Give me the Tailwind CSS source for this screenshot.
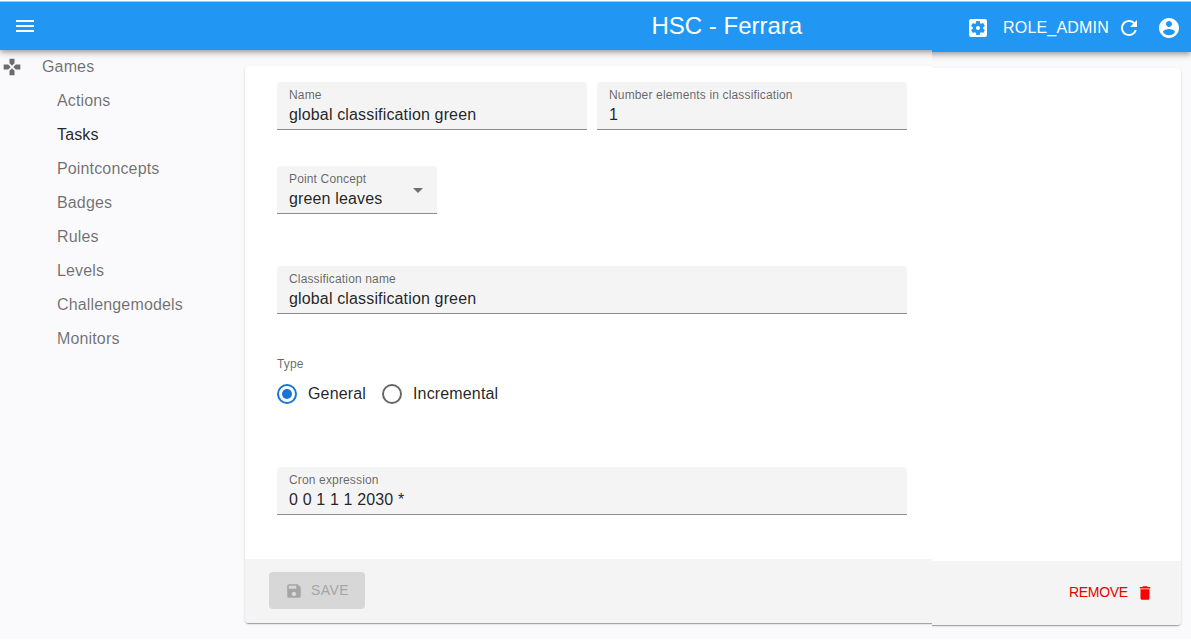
<!DOCTYPE html>
<html lang="en">
<head>
<meta charset="utf-8">
<title>HSC - Ferrara</title>
<script src="https://cdn.jsdelivr.net/npm/@tailwindcss/browser@4"></script>
</head>
<body class="h-[640px] w-[1191px] overflow-hidden bg-white font-['Liberation_Sans',Arial,sans-serif] text-base tracking-[0.15px] text-black/87">
<div class="mt-px flex h-[638px] border-t border-[#a9c3dc] bg-[#fafafc]">

  <!-- Navigation and form -->
  <div class="flex w-[932px] flex-col overflow-hidden">
    <header class="relative z-10 flex h-12 w-[952px] shrink-0 items-center bg-[#2196f3] pl-[13px] text-white shadow-[0_2px_4px_-1px_rgba(0,0,0,0.2),0_4px_5px_0_rgba(0,0,0,0.14),0_1px_10px_0_rgba(0,0,0,0.12)]">
      <svg class="size-6" viewBox="0 0 24 24" fill="currentColor"><path d="M3 18h18v-2H3v2zm0-5h18v-2H3v2zm0-7v2h18V6H3z"/></svg>
      <h1 class="ml-[614.500px] text-2xl leading-8 tracking-normal">HSC - Ferrara</h1>
    </header>
    <div class="flex grow">
      <nav class="w-[245px] shrink-0 text-black/57">
        <div class="flex h-[34px] items-center pl-0.5">
          <svg class="size-5" viewBox="0 0 24 24" fill="currentColor"><path d="M15 7.5V2H9v5.500l3 3 3-3zM7.500 9H2v6h5.500l3-3-3-3zM9 16.500V22h6v-5.500l-3-3-3 3zM16.500 9l-3 3 3 3H22V9h-5.500z"/></svg>
          <span class="ml-5">Games</span>
        </div>
        <ul class="pl-[57px] leading-[34px]">
          <li>Actions</li>
          <li class="text-black/87">Tasks</li>
          <li>Pointconcepts</li>
          <li>Badges</li>
          <li>Rules</li>
          <li>Levels</li>
          <li>Challengemodels</li>
          <li>Monitors</li>
        </ul>
      </nav>
      <main class="mt-4 flex h-[557px] w-[707px] shrink-0 flex-col rounded-l bg-white shadow-[0_2px_1px_-1px_rgba(0,0,0,0.2),0_1px_1px_0_rgba(0,0,0,0.14),0_1px_3px_0_rgba(0,0,0,0.12)]">
        <form class="h-[493px] pt-4 pl-8">
          <div class="flex gap-2.5">
            <div class="h-12 w-[310px] rounded-t border-b border-[#8c8c8c] bg-[#f4f4f4] px-3 pt-[5px]">
              <div class="text-xs leading-4 text-black/60">Name</div>
              <div class="leading-6">global classification green</div>
            </div>
            <div class="h-12 w-[310px] rounded-t border-b border-[#8c8c8c] bg-[#f4f4f4] px-3 pt-[5px]">
              <div class="text-xs leading-4 text-black/60">Number elements in classification</div>
              <div class="leading-6">1</div>
            </div>
          </div>
          <div class="mt-9 flex h-12 w-40 items-center justify-between rounded-t border-b border-[#8c8c8c] bg-[#f4f4f4] pr-[7px] pl-3">
            <div class="pt-[2px]">
              <div class="text-xs leading-4 text-black/60">Point Concept</div>
              <div class="leading-6">green leaves</div>
            </div>
            <svg class="size-6 text-black/54" viewBox="0 0 24 24" fill="currentColor"><path d="M7 10l5 5 5-5z"/></svg>
          </div>
          <div class="mt-[52px] h-12 w-[630px] rounded-t border-b border-[#8c8c8c] bg-[#f4f4f4] px-3 pt-[5px]">
            <div class="text-xs leading-4 text-black/60">Classification name</div>
            <div class="leading-6">global classification green</div>
          </div>
          <div class="mt-[42px] text-xs leading-4 text-black/60">Type</div>
          <div class="mt-2.5 flex h-6 items-center">
            <svg class="-ml-0.5 size-6 text-[#1976d2]" viewBox="0 0 24 24" fill="currentColor"><path d="M12 2a10 10 0 1 0 0 20 10 10 0 0 0 0-20zm0 18a8 8 0 1 1 0-16 8 8 0 0 1 0 16z"/><circle cx="12" cy="12" r="5"/></svg>
            <span class="ml-[9px] w-[72px] leading-6">General</span>
            <svg class="size-6 text-black/60" viewBox="0 0 24 24" fill="currentColor"><path d="M12 2a10 10 0 1 0 0 20 10 10 0 0 0 0-20zm0 18a8 8 0 1 1 0-16 8 8 0 0 1 0 16z"/></svg>
            <span class="ml-[9px] leading-6">Incremental</span>
          </div>
          <div class="mt-[61px] h-12 w-[630px] rounded-t border-b border-[#8c8c8c] bg-[#f4f4f4] px-3 pt-[5px]">
            <div class="text-xs leading-4 text-black/60">Cron expression</div>
            <div class="leading-6">0 0 1 1 1 2030 *</div>
          </div>
        </form>
        <footer class="flex h-16 items-start rounded-bl bg-[#f4f4f4] pt-[13px] pl-6">
          <button class="flex h-[37px] w-24 items-center rounded bg-[#d7d7d7] pl-4 text-sm tracking-[0.4px] text-[#a5a5a5]">
            <svg class="mt-px size-[18px]" viewBox="0 0 24 24" fill="currentColor"><path d="M17 3H5a2 2 0 0 0-2 2v14a2 2 0 0 0 2 2h14c1.100 0 2-.9 2-2V7l-4-4zm-5 16c-1.660 0-3-1.340-3-3s1.340-3 3-3 3 1.340 3 3-1.340 3-3 3zm3-10H5V5h10v4z"/></svg>
            <span class="mb-0.5 ml-2">SAVE</span>
          </button>
        </footer>
      </main>
    </div>
  </div>

  <!-- Account bar and removal -->
  <div class="flex w-[259px] flex-col overflow-hidden">
    <header class="relative z-10 -ml-5 flex h-[50px] shrink-0 items-center bg-[#2196f3] pt-0.5 pl-[54px] text-white shadow-[0_2px_4px_-1px_rgba(0,0,0,0.2),0_4px_5px_0_rgba(0,0,0,0.14),0_1px_10px_0_rgba(0,0,0,0.12)]">
      <svg class="size-6" viewBox="0 0 24 24" fill="currentColor"><path d="M12 10c-1.100 0-2 .9-2 2s.9 2 2 2 2-.9 2-2-.9-2-2-2zm7-7H5a2 2 0 0 0-2 2v14a2 2 0 0 0 2 2h14a2 2 0 0 0 2-2V5a2 2 0 0 0-2-2zm-1.750 9c0 .23-.02.460-.05.680l1.480 1.160c.13.110.17.300.08.450l-1.400 2.420c-.09.150-.27.210-.43.150l-1.740-.7c-.36.280-.76.510-1.180.69l-.26 1.850c-.03.170-.18.300-.35.300h-2.800c-.17 0-.32-.13-.35-.29l-.26-1.850c-.43-.18-.82-.41-1.180-.69l-1.740.7c-.16.060-.34 0-.43-.15l-1.400-2.420a.35.35 0 0 1 .08-.45l1.480-1.160A5.500 5.500 0 0 1 6.750 12c0-.23.020-.46.050-.69l-1.480-1.160a.35.35 0 0 1-.08-.45l1.400-2.420c.09-.15.270-.21.430-.15l1.740.7c.36-.28.760-.51 1.180-.69l.26-1.850c.03-.17.180-.3.350-.3h2.800c.17 0 .32.130.350.290l.26 1.850c.43.180.82.410 1.180.69l1.740-.7c.16-.06.340 0 .43.150l1.400 2.420c.09.150.05.340-.08.450l-1.480 1.160c.03.230.05.460.05.690z"/></svg>
      <span class="ml-[13px] w-[114px] leading-6 tracking-[0.2px]">ROLE_ADMIN</span>
      <svg class="size-6" viewBox="0 0 24 24" fill="currentColor"><path d="M17.650 6.350A7.958 7.958 0 0 0 12 4c-4.420 0-7.990 3.580-7.990 8s3.570 8 7.990 8c3.730 0 6.840-2.550 7.730-6h-2.080A5.990 5.990 0 0 1 12 18c-3.310 0-6-2.690-6-6s2.690-6 6-6c1.660 0 3.140.69 4.220 1.780L13 11h7V4l-2.350 2.350z"/></svg>
      <svg class="ml-4 size-6" viewBox="0 0 24 24" fill="currentColor"><path d="M12 2C6.480 2 2 6.480 2 12s4.480 10 10 10 10-4.480 10-10S17.520 2 12 2zm0 3c1.660 0 3 1.340 3 3s-1.340 3-3 3-3-1.340-3-3 1.340-3 3-3zm0 14.200a7.200 7.200 0 0 1-6-3.220c.03-1.990 4-3.080 6-3.080 1.990 0 5.970 1.090 6 3.080a7.200 7.200 0 0 1-6 3.220z"/></svg>
    </header>
    <section class="mt-4 -ml-5 flex h-[557px] w-[269px] flex-col rounded-r bg-white pt-[493px] shadow-[0_2px_1px_-1px_rgba(0,0,0,0.2),0_1px_1px_0_rgba(0,0,0,0.14),0_1px_3px_0_rgba(0,0,0,0.12)]">
      <div class="flex h-16 items-center rounded-br bg-[#f4f4f4] pl-[157px] text-sm tracking-[-0.3px] text-[#e80000]">
        <span class="mb-0.5 w-[67px]">REMOVE</span>
        <svg class="size-[18px] text-[#ff0000]" viewBox="0 0 24 24" fill="currentColor"><path d="M6 19c0 1.100.9 2 2 2h8c1.100 0 2-.9 2-2V7H6v12zM19 4h-3.500l-1-1h-5l-1 1H5v2h14V4z"/></svg>
      </div>
    </section>
  </div>
</div>
</body>
</html>
